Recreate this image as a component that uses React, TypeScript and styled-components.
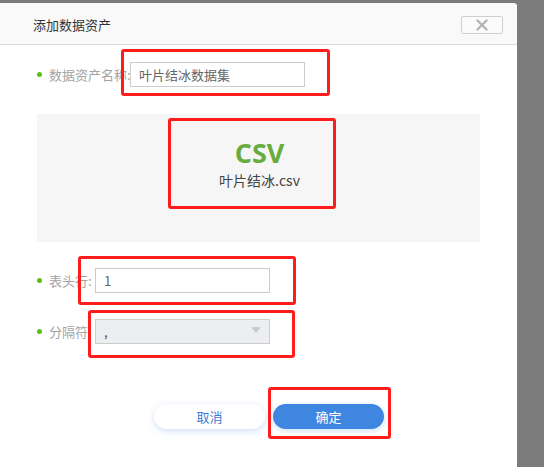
import styled, { createGlobalStyle } from "styled-components";

const GlobalStyle = createGlobalStyle`
	html, body {
		margin: 0;
		padding: 0;
		background: #7b7b7b;
		font-family: "Noto Sans CJK SC", "Liberation Sans", sans-serif;
		font-size: 13px;
	}
`;

const Dialog = styled("section")`
	position: relative;
	width: 517px;
	height: 464px;
	margin-top: 3px;
	background-color: #ffffff;
	border-top-right-radius: 4px;
	overflow: hidden;
	display: flex;
	flex-direction: column;
`;

const Header = styled("header")`
	height: 40px;
	flex-shrink: 0;
	display: flex;
	align-items: center;
	justify-content: space-between;
	padding: 2px 14px 0 33px;
	box-sizing: border-box;
	height: 42px;
	background-color: #f9f9f9;
	border-bottom: 1px solid #dcdcdc;
`;

const Title = styled("h1")`
	margin: 0;
	font-size: 13px;
	font-weight: normal;
	color: #333333;
	line-height: 16px;
`;

const CloseButton = styled("button")`
	width: 42px;
	height: 18px;
	padding: 0;
	border: 1px solid #cfcfcf;
	border-radius: 2px;
	background: #fbfbfb;
	display: flex;
	align-items: center;
	justify-content: center;
`;

const Body = styled("div")`
	display: flex;
	flex-direction: column;
	padding: 17px 0 0 37px;
`;

const Row = styled("div")<{ $gap: number }>`
	display: flex;
	align-items: center;
	height: 25px;
	margin-top: ${({ $gap }) => $gap}px;
`;

const Dot = styled("span")`
	width: 5px;
	height: 5px;
	border-radius: 50%;
	background-color: #5cbf14;
	margin-right: 7px;
	flex-shrink: 0;
`;

const Label = styled("label")<{ $width: number }>`
	width: ${({ $width }) => $width}px;
	color: #a3a3a3;
	font-size: 13px;
	line-height: 16px;
	white-space: nowrap;
`;

const TextInput = styled("div")`
	box-sizing: border-box;
	width: 175px;
	height: 25px;
	border: 1px solid #cccccc;
	padding: 0 8px;
	display: flex;
	align-items: center;
	color: #666666;
	font-size: 13px;
	line-height: 16px;
`;

const SelectBox = styled(TextInput)`
	background-color: #eceef1;
	justify-content: space-between;
	padding-right: 8px;
	color: #555555;
`;

const Caret = styled("span")`
	width: 0;
	height: 0;
	border-left: 5px solid transparent;
	border-right: 5px solid transparent;
	border-top: 6px solid #c8cacd;
	margin-top: -3px;
`;

const FilePanel = styled("div")`
	width: 443px;
	height: 128px;
	margin-top: 27px;
	background-color: #f6f6f6;
	display: flex;
	flex-direction: column;
	align-items: center;
	padding-top: 23px;
	box-sizing: border-box;
`;

const FileType = styled("div")`
	font-family: "Open Sans", "Liberation Sans", sans-serif;
	font-weight: 700;
	font-size: 27px;
	line-height: 32px;
	color: #68ac3e;
	margin-left: 2px;
`;

const FileName = styled("div")`
	font-size: 14px;
	line-height: 18px;
	color: #444444;
	margin-top: 2px;
	margin-left: 2px;
`;

const Footer = styled("div")`
	display: flex;
	gap: 8px;
	padding-left: 117px;
	margin-top: 60px;
`;

const Button = styled("button")<{ $primary?: boolean }>`
	width: 111px;
	height: 25px;
	border-radius: 13px;
	border: none;
	font-family: inherit;
	font-size: 13px;
	line-height: 16px;
	color: ${({ $primary }) => ($primary ? "#ffffff" : "#3e7bd6")};
	background-color: ${({ $primary }) => ($primary ? "#3e86e0" : "#ffffff")};
	box-shadow: 0 2px 6px rgba(70, 130, 220, 0.25);
`;

const Annotation = styled("div")<{ $x: number; $y: number; $w: number; $h: number }>`
	position: absolute;
	left: ${({ $x }) => $x}px;
	top: ${({ $y }) => $y - 3}px;
	width: ${({ $w }) => $w}px;
	height: ${({ $h }) => $h}px;
	box-sizing: border-box;
	border: 3px solid #ff1c1c;
	border-radius: 3px;
	pointer-events: none;
`;

const marks = [
	{ x: 121, y: 49, w: 209, h: 47 },
	{ x: 168, y: 118, w: 168, h: 91 },
	{ x: 78, y: 256, w: 218, h: 49 },
	{ x: 88, y: 310, w: 207, h: 48 },
	{ x: 268, y: 387, w: 123, h: 52 },
];

const App = () => {
	return (
		<>
			<GlobalStyle />
			<Dialog>
				<Header>
					<Title>添加数据资产</Title>
					<CloseButton aria-label="关闭">
						<svg width="12" height="12" viewBox="0 0 12 12">
							<path
								d="M1.5 1.5 L10.5 10.5 M10.5 1.5 L1.5 10.5"
								stroke="#b4b4b4"
								strokeWidth="2.4"
								strokeLinecap="round"
							/>
						</svg>
					</CloseButton>
				</Header>
				<Body>
					<Row $gap={0}>
						<Dot />
						<Label $width={81}>数据资产名称:</Label>
						<TextInput>叶片结冰数据集</TextInput>
					</Row>
					<FilePanel>
						<FileType>CSV</FileType>
						<FileName>叶片结冰.csv</FileName>
					</FilePanel>
					<Row $gap={26}>
						<Dot />
						<Label $width={46}>表头行:</Label>
						<TextInput>1</TextInput>
					</Row>
					<Row $gap={26}>
						<Dot />
						<Label $width={46}>分隔符:</Label>
						<SelectBox>
							<span>,</span>
							<Caret />
						</SelectBox>
					</Row>
					<Footer>
						<Button>取消</Button>
						<Button $primary>确定</Button>
					</Footer>
				</Body>
				{marks.map((m, i) => (
					<Annotation key={i} $x={m.x} $y={m.y} $w={m.w} $h={m.h} />
				))}
			</Dialog>
		</>
	);
};

export default App;
